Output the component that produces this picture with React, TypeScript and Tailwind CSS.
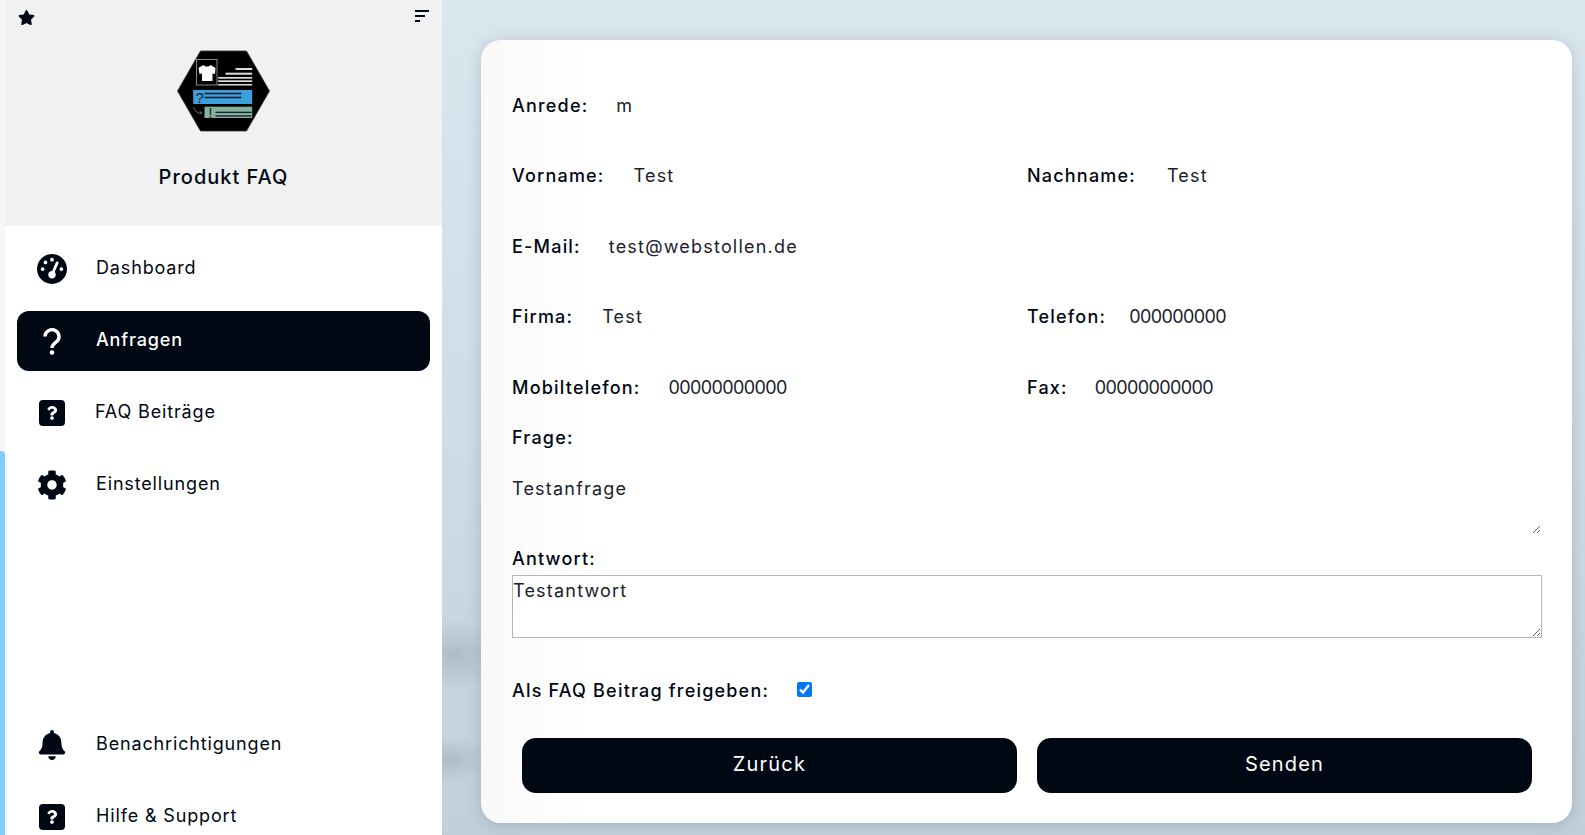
import { FaBell, FaCog, FaQuestion, FaStar } from "react-icons/fa";
import { FaGaugeHigh } from "react-icons/fa6";
import type { ReactNode } from "react";

const font = "font-['Inter','Noto_Sans',sans-serif]";

function Logo() {
  return (
    <svg width="95" height="82" viewBox="0 0 94 82">
      <polygon points="24,1 70,1 93,41 70,81 24,81 1,41" fill="#000" stroke="#333" strokeWidth="0.8" />
      <rect x="20" y="9.500" width="20.500" height="25.500" fill="none" stroke="#aaa" strokeWidth="0.8" />
      <path d="M22 18l5-3c2 2 5 2 7 0l5 3-.5 6-2.500-.5V31H25.500v-7.500l-2.500.5z" fill="#fff" />
      <g fill="#ddd">
        <rect x="59" y="18" width="16.700" height="2" />
        <rect x="49" y="22.700" width="26.700" height="2" />
        <rect x="41.700" y="27" width="34" height="1.700" />
        <rect x="41.700" y="30.300" width="34" height="1.700" />
        <rect x="41.700" y="34" width="34" height="1.500" />
      </g>
      <rect x="16.700" y="40" width="59" height="14" fill="#3d9fdc" />
      <text x="19" y="53" fontSize="15" fontFamily="Liberation Sans" fill="#10202c">?</text>
      <rect x="28" y="42.700" width="36.700" height="1.600" fill="#10202c" />
      <rect x="28" y="46.700" width="36.700" height="1.600" fill="#10202c" />
      <path d="M17 57c1 4 3 6 8 6m-2-2l2.500 2-2.500 1" fill="none" stroke="#888" strokeWidth="0.7" />
      <rect x="28" y="56.700" width="47.700" height="11.300" fill="#86b09c" />
      <text x="32" y="68" fontSize="14" fontFamily="Liberation Sans" fill="#10202c">!</text>
      <rect x="39" y="61.700" width="36" height="1.300" fill="#10202c" />
      <rect x="39" y="65.300" width="36" height="1.300" fill="#10202c" />
    </svg>
  );
}

function SquareHelp() {
  return (
    <div className="flex h-[26px] w-[26px] items-center justify-center rounded-[4px] bg-[#000814]">
      <FaQuestion className="text-[14px] text-white" />
    </div>
  );
}

function ThinHelp() {
  return (
    <svg width="18" height="27" viewBox="0 0 18 27" fill="none">
      <path d="M2 8.500a7 6.800 0 1 1 11 5.600c-2.500 1.800-4 3-4 5.900" stroke="#fff" strokeWidth="3.400" />
      <circle cx="9" cy="24.500" r="2.300" fill="#fff" />
    </svg>
  );
}

function NavItem({ icon, label, active, labelClass }: { icon: ReactNode; label: string; active?: boolean; labelClass?: string }) {
  return (
    <div
      className={`mx-3 flex h-[60px] w-[413px] shrink-0 items-center rounded-xl ${
        active ? "bg-[#000814] text-white" : "text-[#000814]"
      }`}
    >
      <div className="flex w-[70px] justify-center">{icon}</div>
      <span className={`mb-[3px] text-[18px] tracking-[0.85px] ${labelClass ?? "ml-[9px]"} ${active ? "font-medium" : ""}`}>{label}</span>
    </div>
  );
}

function Field({ label, value, gap, digits }: { label: string; value: string; gap: string; digits?: boolean }) {
  return (
    <div className="flex items-center text-[18px] tracking-[1.2px] text-[#000814]">
      <span className="font-medium">{label}</span>
      <span className={`${gap} text-[#1a212c] ${digits ? "tracking-[-0.6px]" : ""}`}>{value}</span>
    </div>
  );
}

export default function App() {
  return (
    <div className={`flex h-[835px] w-[1585px] overflow-hidden ${font}`}>
      <div className="flex w-[5px] shrink-0 flex-col bg-[#f5f7fb]">
        <div className="h-[451px]" />
        <div className="flex-1 rounded-tr-sm bg-[#80ccff]" />
      </div>

      <aside className="flex w-[437px] shrink-0 flex-col bg-white">
        <div className="h-[226px] shrink-0 bg-[#f1f1f1] text-[#000814]">
          <div className="flex items-start justify-between px-[13px] pt-[9px]">
            <FaStar className="text-[17px]" />
            <svg width="14" height="13" viewBox="0 0 14 13" className="mt-px">
              <rect width="14" height="2" fill="#000814" />
              <rect y="5" width="10" height="2" fill="#000814" />
              <rect y="10" width="5" height="2" fill="#000814" />
            </svg>
          </div>
          <div className="mt-[24px] flex justify-center">
            <Logo />
          </div>
          <div className="mt-[30px] text-center text-[20px] font-medium tracking-[1px]">Produkt FAQ</div>
        </div>

        <nav className="mt-[13px] flex shrink-0 flex-col gap-3">
          <NavItem icon={<FaGaugeHigh className="text-[30px] text-[#000814]" />} label="Dashboard" />
          <NavItem icon={<ThinHelp />} label="Anfragen" active />
          <NavItem icon={<SquareHelp />} label="FAQ Beiträge" labelClass="ml-[8px]" />
          <NavItem icon={<FaCog className="text-[30px] text-[#000814]" />} label="Einstellungen" />
        </nav>
        <nav className="mt-[200px] flex shrink-0 flex-col gap-3">
          <NavItem icon={<FaBell className="text-[30px] text-[#000814]" />} label="Benachrichtigungen" />
          <NavItem icon={<SquareHelp />} label="Hilfe & Support" />
        </nav>
      </aside>

      <main className="min-w-0 flex-1 bg-[radial-gradient(ellipse_46px_36px_at_13px_655px,#afbcc8,transparent),radial-gradient(ellipse_40px_22px_at_8px_760px,#afbcc8,transparent),linear-gradient(to_bottom,#dbe7ef,#d0dce6_50%,#c3cfda)] pt-10 pr-[13px] pb-3 pl-[39px]">
        <div className="h-[783px] rounded-[20px] bg-gradient-to-r from-[#f9f9f9] to-white to-[10%] px-[31px] shadow-[0_2px_16px_rgba(70,90,110,0.25)]">
          <div className="grid h-[79px] grid-cols-[515px_1fr] items-end pt-[45px]">
            <Field label="Anrede:" value="m" gap="ml-[28px]" />
          </div>
          <div className="mt-[43px] grid h-[26px] grid-cols-[515px_1fr]">
            <Field label="Vorname:" value="Test" gap="ml-[29px]" />
            <Field label="Nachname:" value="Test" gap="ml-[31px]" />
          </div>
          <div className="mt-[45px] grid h-[26px] grid-cols-[515px_1fr]">
            <Field label="E-Mail:" value="test@webstollen.de" gap="ml-[28px]" />
          </div>
          <div className="mt-[44px] grid h-[26px] grid-cols-[515px_1fr]">
            <Field label="Firma:" value="Test" gap="ml-[29px]" />
            <Field label="Telefon:" value="000000000" gap="ml-[23px]" digits />
          </div>
          <div className="mt-[45px] grid h-[26px] grid-cols-[515px_1fr]">
            <Field label="Mobiltelefon:" value="00000000000" gap="ml-[28px]" digits />
            <Field label="Fax:" value="00000000000" gap="ml-[27px]" digits />
          </div>
          <div className="mt-[25px] text-[18px] font-medium leading-[26px] tracking-[1.2px] text-[#000814]">Frage:</div>
          <textarea
            readOnly
            defaultValue="Testanfrage"
            className="mt-[25px] block h-[58px] w-[1029px] bg-transparent text-[18px] leading-[26px] tracking-[1.2px] text-[#1a212c] outline-none"
          />
          <div className="mt-[12px] text-[18px] font-medium leading-[26px] tracking-[1.2px] text-[#000814]">Antwort:</div>
          <textarea
            readOnly
            defaultValue="Testantwort"
            className="mt-[3px] block h-[63px] w-[1030px] border border-[#b5b5b5] bg-white pt-[2px] text-[18px] leading-[26px] tracking-[1.2px] text-[#1a212c] outline-none"
          />
          <div className="mt-[39px] flex h-[26px] items-center pt-px text-[18px] font-medium tracking-[1.2px] text-[#000814]">
            <span>Als FAQ Beitrag freigeben:</span>
            <input type="checkbox" defaultChecked className="mb-[3px] ml-[28px] h-[15px] w-[15px] accent-[#0075ff]" />
          </div>
          <div className="mt-[35px] flex gap-5 pl-[10px]">
            <button className="h-[55px] w-[495px] shrink-0 rounded-[14px] bg-[#000814] pb-[4px] text-[20px] tracking-[1.200px] text-white">Zurück</button>
            <button className="h-[55px] w-[495px] shrink-0 rounded-[14px] bg-[#000814] pb-[4px] text-[20px] tracking-[1.200px] text-white">Senden</button>
          </div>
        </div>
      </main>
    </div>
  );
}
